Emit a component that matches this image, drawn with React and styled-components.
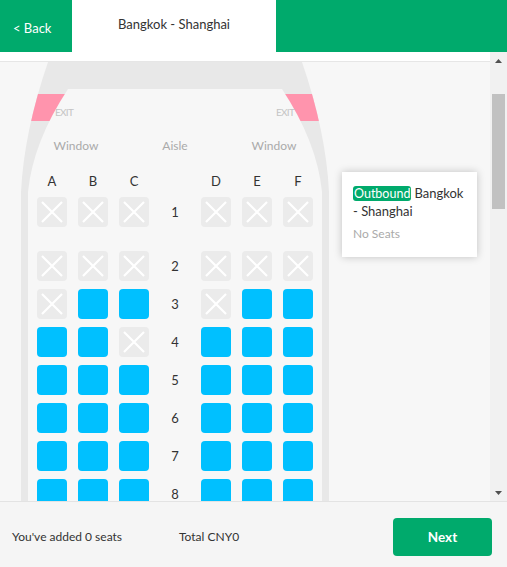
import React from 'react';
import styled, { createGlobalStyle } from 'styled-components';

const GlobalStyle = createGlobalStyle`
    html, body, #root {
        margin: 0;
        height: 100%;
    }
    body {
        font-family: Lato, "Open Sans", sans-serif;
        color: #333;
    }
`;

const Page = styled.div`
    display: flex;
    flex-direction: column;
    height: 100vh;
    overflow: hidden;
`;

const Header = styled.div`
    display: flex;
    height: 52px;
    flex-shrink: 0;
    background: #00aa6c;
`;

const BackButton = styled.div`
    width: 72px;
    box-sizing: border-box;
    padding: 4px 0 0 13px;
    display: flex;
    align-items: center;
    color: #fff;
    font-size: 13px;
`;

const Tab = styled.div`
    width: 204px;
    background: #fff;
    display: flex;
    justify-content: center;
    padding-top: 16px;
    box-sizing: border-box;
    font-size: 13px;
    color: #333;
`;

const Main = styled.div`
    flex: 1;
    display: flex;
    min-height: 0;
`;

const ScrollArea = styled.div`
    position: relative;
    flex: 1;
    overflow: hidden;
    background: #f7f7f7;
`;

const TopStrip = styled.div`
    height: 9px;
    background: #fff;
    border-bottom: 1px solid #e6e6e6;
`;

const Plane = styled.div`
    width: 308px;
    margin-left: 21px;
`;

const Nose = styled.div`
    position: relative;
    height: 130px;
`;

const NoseArt = styled.svg`
    position: absolute;
    top: 0;
    left: 0;
`;

const NoseContent = styled.div`
    position: relative;
    padding: 76px 7px 0;
    display: flex;
    flex-direction: column;
    gap: 19px;
`;

const SideLabels = styled.div`
    display: grid;
    grid-template-columns: 96px 1fr 96px;
    text-align: center;
    font-size: 12px;
    line-height: 16px;
    color: #aaa;
`;

const SeatGrid = styled.div`
    display: grid;
    grid-template-columns: repeat(7, 30px);
    column-gap: 11px;
    padding: 0 9px;
    margin-bottom: ${(p) => p.$gapAfter || 0}px;
`;

const ColLetter = styled.div`
    text-align: center;
    font-size: 13px;
    line-height: 16px;
    color: #333;
`;

const Cabin = styled.div`
    border-left: 7px solid #e8e8e8;
    border-right: 7px solid #e8e8e8;
    padding-top: 5px;
    display: flex;
    flex-direction: column;
`;

const Seat = styled.div`
    width: 30px;
    height: 30px;
    border-radius: 4px;
    background: ${(p) => (p.$taken ? '#ebebeb' : '#00c0ff')};
    display: flex;
`;

const RowNumber = styled.div`
    display: flex;
    align-items: center;
    justify-content: center;
    font-size: 13px;
    color: #333;
`;

const Popover = styled.div`
    position: absolute;
    top: 120px;
    left: 342px;
    width: 135px;
    box-sizing: border-box;
    padding: 12px 10px 14px 11px;
    background: #fff;
    box-shadow: 0 0 8px rgba(0, 0, 0, 0.22);
    font-size: 13px;
    line-height: 18px;
    color: #333;
`;

const Badge = styled.span`
    display: inline-block;
    margin-right: 3px;
    padding: 0 1px;
    line-height: 15px;
    border-radius: 3px;
    background: #00aa6c;
    color: #fff;
    font-size: 12.5px;
`;

const Muted = styled.div`
    margin-top: 5px;
    font-size: 12px;
    color: #aaa;
`;

const Scrollbar = styled.div`
    width: 17px;
    display: flex;
    flex-direction: column;
    background: #f1f1f1;
`;

const ArrowButton = styled.div`
    height: 17px;
    display: flex;
    align-items: center;
    justify-content: center;
`;

const Track = styled.div`
    flex: 1;
    padding: 25px 2px 0;
`;

const Thumb = styled.div`
    height: 115px;
    background: #c1c1c1;
`;

const Footer = styled.div`
    height: 66px;
    flex-shrink: 0;
    box-sizing: border-box;
    border-top: 1px solid #e3e3e3;
    background: #f5f5f5;
    display: flex;
    align-items: center;
    padding: 0 15px 0 12px;
    font-size: 12px;
    color: #333;
`;

const Summary = styled.div`
    width: ${(p) => p.$width || 'auto'};
    padding-top: 3px;
`;

const NextButton = styled.button`
    margin-left: auto;
    width: 99px;
    height: 38px;
    margin-top: 4px;
    border: none;
    border-radius: 4px;
    background: #00aa6c;
    color: #fff;
    font-family: inherit;
    font-size: 13.5px;
    font-weight: 700;
`;

const ROWS = [
    { n: 1, seats: 'xxxxxx', gap: 24 },
    { n: 2, seats: 'xxxxxx' },
    { n: 3, seats: 'xooxoo' },
    { n: 4, seats: 'ooxooo' },
    { n: 5, seats: 'oooooo' },
    { n: 6, seats: 'oooooo' },
    { n: 7, seats: 'oooooo' },
    { n: 8, seats: 'oooooo' },
];

const Cross = () => (
    <svg width="30" height="30" viewBox="0 0 30 30">
        <path d="M5 5 L25 25 M25 5 L5 25" stroke="#fff" strokeWidth="2.2" />
    </svg>
);

const NoseDrawing = () => {
    const outer = 'M27,0 L281,0 Q305,70 308,130 L0,130 Q3,70 27,0 Z';
    return (
        <NoseArt width="308" height="130" viewBox="0 0 308 130">
            <defs>
                <clipPath id="nose-outer">
                    <path d={outer} />
                </clipPath>
            </defs>
            <path d={outer} fill="#e8e8e8" />
            <g clipPath="url(#nose-outer)" fill="#ff94ad">
                <rect x="0" y="32" width="60" height="27" />
                <rect x="248" y="32" width="60" height="27" />
            </g>
            <path d="M47,27 L261,27 Q296,80 301,130 L7,130 Q12,80 47,27 Z" fill="#f7f7f7" />
            <text x="34" y="54" fontSize="10" fill="#c4c4c4" letterSpacing="-0.7" fontFamily="Lato, sans-serif">EXIT</text>
            <text x="255" y="54" fontSize="10" fill="#c4c4c4" letterSpacing="-0.7" fontFamily="Lato, sans-serif">EXIT</text>
        </NoseArt>
    );
};

const SeatRow = ({ row }) => {
    const cells = row.seats.split('').map((s, i) => (
        <Seat key={i} $taken={s === 'x'}>{s === 'x' && <Cross />}</Seat>
    ));
    return (
        <SeatGrid $gapAfter={row.gap || 8}>
            {cells.slice(0, 3)}
            <RowNumber>{row.n}</RowNumber>
            {cells.slice(3)}
        </SeatGrid>
    );
};

const Triangle = ({ down }) => (
    <svg width="7" height="4" viewBox="0 0 7 4">
        <path d={down ? 'M0 0 L7 0 L3.5 4 Z' : 'M0 4 L7 4 L3.5 0 Z'} fill="#505050" />
    </svg>
);

export default function App() {
    return (
        <Page>
            <GlobalStyle />
            <Header>
                <BackButton>&lt; Back</BackButton>
                <Tab>Bangkok - Shanghai</Tab>
            </Header>
            <Main>
                <ScrollArea>
                    <TopStrip />
                    <Plane>
                        <Nose>
                            <NoseDrawing />
                            <NoseContent>
                                <SideLabels>
                                    <span>Window</span>
                                    <span>Aisle</span>
                                    <span>Window</span>
                                </SideLabels>
                                <SeatGrid>
                                    {['A', 'B', 'C', '', 'D', 'E', 'F'].map((l, i) => (
                                        <ColLetter key={i}>{l}</ColLetter>
                                    ))}
                                </SeatGrid>
                            </NoseContent>
                        </Nose>
                        <Cabin>
                            {ROWS.map((row) => (
                                <SeatRow key={row.n} row={row} />
                            ))}
                        </Cabin>
                    </Plane>
                    <Popover>
                        <div>
                            <Badge>Outbound</Badge>Bangkok - Shanghai
                        </div>
                        <Muted>No Seats</Muted>
                    </Popover>
                </ScrollArea>
                <Scrollbar>
                    <ArrowButton><Triangle /></ArrowButton>
                    <Track><Thumb /></Track>
                    <ArrowButton><Triangle down /></ArrowButton>
                </Scrollbar>
            </Main>
            <Footer>
                <Summary $width="167px">You've added 0 seats</Summary>
                <Summary>Total CNY0</Summary>
                <NextButton>Next</NextButton>
            </Footer>
        </Page>
    );
}
